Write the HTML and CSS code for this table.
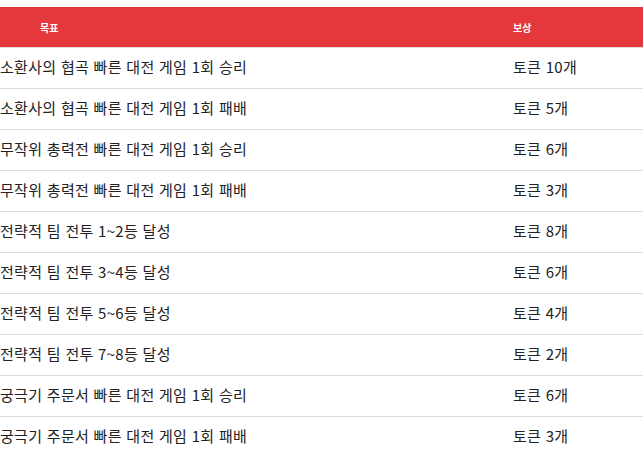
FILE: index.html
```html
<!DOCTYPE html>
<html lang="ko">
<head>
<meta charset="utf-8">
<link rel="stylesheet" href="styles.css">
</head>
<body>
<table class="rewards">
  <thead>
    <tr><th class="goal-h">목표</th><th class="reward-h">보상</th></tr>
  </thead>
  <tbody>
    <tr><td>소환사의 협곡 빠른 대전 게임 1회 승리</td><td>토큰 10개</td></tr>
    <tr><td>소환사의 협곡 빠른 대전 게임 1회 패배</td><td>토큰 5개</td></tr>
    <tr><td>무작위 총력전 빠른 대전 게임 1회 승리</td><td>토큰 6개</td></tr>
    <tr><td>무작위 총력전 빠른 대전 게임 1회 패배</td><td>토큰 3개</td></tr>
    <tr><td>전략적 팀 전투 1~2등 달성</td><td>토큰 8개</td></tr>
    <tr><td>전략적 팀 전투 3~4등 달성</td><td>토큰 6개</td></tr>
    <tr><td>전략적 팀 전투 5~6등 달성</td><td>토큰 4개</td></tr>
    <tr><td>전략적 팀 전투 7~8등 달성</td><td>토큰 2개</td></tr>
    <tr><td>궁극기 주문서 빠른 대전 게임 1회 승리</td><td>토큰 6개</td></tr>
    <tr><td>궁극기 주문서 빠른 대전 게임 1회 패배</td><td>토큰 3개</td></tr>
  </tbody>
</table>
</body>
</html>
```
FILE: styles.css
```css
html, body { margin: 0; padding: 0; background: #fff; }
body { padding-top: 7px; font-family: "Noto Sans CJK KR", "Noto Sans", sans-serif; color: #222; }
.rewards { width: 100%; border-collapse: collapse; }
.rewards th {
  background: #e4383c; color: #fff; font-size: 10px; font-weight: 700;
  height: 40px; padding: 0; text-align: left;
  border-bottom: 1px solid #ddd;
}
.rewards .goal-h { padding-left: 40px; width: 473px; }
.rewards td {
  height: 36px; padding: 0 0 4px 0; font-size: 15px; letter-spacing: 0.3px;
  border-bottom: 1px solid #ddd;
}
.rewards tbody tr:last-child td { border-bottom: none; }
```
